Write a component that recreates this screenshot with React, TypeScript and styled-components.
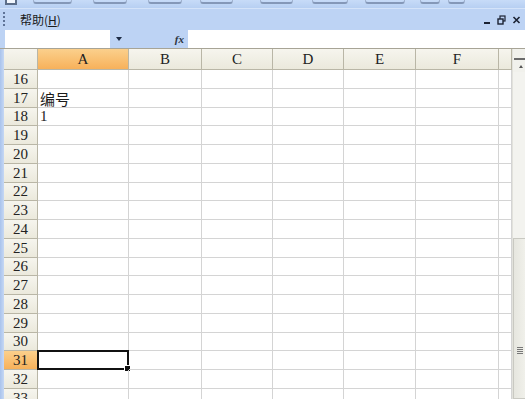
import React from 'react';
import styled, { createGlobalStyle } from 'styled-components';

const menuBlue = '#bdd3f4';
const grid = '#d4d4d4';
const headerLine = '#b9b6a6';
const orange = '#f7b15a';

const cols = [
  { key: 'A', width: 91 },
  { key: 'B', width: 73 },
  { key: 'C', width: 71 },
  { key: 'D', width: 71 },
  { key: 'E', width: 72 },
  { key: 'F', width: 83 },
  { key: '', width: 13 },
];
const template = `34px ${cols.map((c) => c.width + 'px').join(' ')}`;
const rows = Array.from({ length: 18 }, (_, i) => 16 + i);
const values: Record<number, string> = { 17: '编号', 18: '1' };
const selectedRow = 31;

// bottoms of the toolbar icons that are cut off at the top edge
const stubs = [
  { left: 33, width: 39 },
  { left: 93, width: 34 },
  { left: 148, width: 34 },
  { left: 200, width: 33 },
  { left: 260, width: 33 },
  { left: 312, width: 36 },
  { left: 365, width: 40 },
  { left: 420, width: 20 },
  { left: 448, width: 17 },
];

const GlobalStyle = createGlobalStyle`
  html, body { margin: 0; padding: 0; background: #fff; }
  body { font-family: 'Liberation Serif', 'Noto Sans CJK SC', serif; }
`;

const Window = styled.div`
  width: 525px;
  height: 399px;
  overflow: hidden;
  display: flex;
  flex-direction: column;
  background: #fff;
`;

const ToolbarStrip = styled.div`
  height: 8px;
  flex: none;
  position: relative;
  background: linear-gradient(#c7dbf8, #b7cff2);
`;

const Stub = styled.span<{ left: number; width: number }>`
  position: absolute;
  left: ${({ left }) => left}px;
  width: ${({ width }) => width}px;
  top: 0;
  height: 4px;
  border-bottom: 2px solid #5d6f90;
  border-left: 1px solid #8797b3;
  border-right: 1px solid #8797b3;
  border-radius: 0 0 3px 3px;
  box-sizing: border-box;
  opacity: 0.6;
`;

const FirstIcon = styled.span`
  position: absolute;
  left: 5px;
  top: 0;
  width: 12px;
  height: 5px;
  border: 2px solid #44556f;
  border-top: none;
  background: #fff;
  box-sizing: border-box;
  opacity: 0.8;
`;

const MenuBar = styled.div`
  height: 22px;
  flex: none;
  display: flex;
  align-items: center;
  background: ${menuBlue};
  border-top: 1px solid #d4e3f9;
  box-sizing: border-box;
`;

const Grip = styled.span`
  width: 2px;
  height: 16px;
  margin: 0 15px 0 3px;
  background: repeating-linear-gradient(#5f7397 0 2px, transparent 2px 4px);
`;

const MenuItem = styled.span`
  font-family: 'Noto Sans CJK SC', sans-serif;
  font-size: 12px;
  color: #1a1a1a;
  u { text-decoration: underline; }
`;

const Controls = styled.div`
  margin-left: auto;
  margin-right: 4px;
  display: flex;
  align-items: center;
  gap: 6px;
`;

const FormulaBar = styled.div`
  height: 18px;
  flex: none;
  display: flex;
  background: ${menuBlue};
  border-bottom: 1px solid #a7a496;
`;

const NameBox = styled.div`
  width: 105px;
  margin-left: 5px;
  background: #fff;
`;

const NameDrop = styled.div`
  width: 78px;
  display: flex;
  align-items: center;
  padding-left: 6px;
  box-sizing: border-box;
`;

const Caret = styled.span`
  width: 0;
  height: 0;
  border-left: 3px solid transparent;
  border-right: 3px solid transparent;
  border-top: 4px solid #1d2b45;
`;

const Fx = styled.span`
  margin-left: auto;
  margin-right: 4px;
  font-family: 'Liberation Serif', serif;
  font-style: italic;
  font-weight: bold;
  font-size: 11px;
  color: #2c3442;
`;

const FormulaInput = styled.div`
  flex: 1;
  background: #fff;
`;

const Sheet = styled.div`
  flex: 1;
  display: flex;
  min-height: 0;
`;

const LeftEdge = styled.div`
  width: 4px;
  flex: none;
  background: linear-gradient(90deg, #a9c3ec, #c6d8f4);
`;

const GridArea = styled.div`
  display: flex;
  flex-direction: column;
`;

const Row = styled.div<{ head?: boolean }>`
  display: grid;
  grid-template-columns: ${template};
  height: ${({ head }) => (head ? '21px' : '18.75px')};
  flex: none;
`;

const ColHead = styled.div<{ active?: boolean }>`
  display: flex;
  align-items: center;
  justify-content: center;
  font-size: 15px;
  line-height: 1;
  color: #222;
  background: ${({ active }) =>
    active ? `linear-gradient(#fbd08c, ${orange})` : 'linear-gradient(#f6f5ee, #ebe9dc)'};
  border-right: 1px solid ${headerLine};
  border-bottom: 1px solid ${headerLine};
  box-sizing: border-box;
`;

const RowHead = styled(ColHead)`
  padding-top: 1px;
`;

const Cell = styled.div<{ cjk?: boolean }>`
  position: relative;
  display: flex;
  align-items: center;
  padding-left: 2px;
  padding-top: ${({ cjk }) => (cjk ? '2px' : '0')};
  font-family: ${({ cjk }) => (cjk ? "'Noto Sans CJK SC', sans-serif" : "'Liberation Serif', serif")};
  font-size: 15px;
  line-height: 1;
  color: #1c1c1c;
  border-right: 1px solid ${grid};
  border-bottom: 1px solid ${grid};
  box-sizing: border-box;
  white-space: nowrap;
`;

const Selection = styled.div`
  position: absolute;
  left: -1px;
  top: -1px;
  right: -1px;
  bottom: -1px;
  border: 2px solid #111;
`;

const FillHandle = styled.span`
  position: absolute;
  right: -4px;
  bottom: -4px;
  width: 5px;
  height: 5px;
  background: #111;
  border: 1px solid #fff;
`;

const Scrollbar = styled.div`
  width: 13px;
  flex: none;
  display: flex;
  flex-direction: column;
  background: #f1f1ec;
  border-left: 1px solid #e2e2dc;
  box-sizing: border-box;
`;

const SplitBox = styled.div`
  height: 9px;
  flex: none;
  border-bottom: 2px solid #6b6b6b;
  margin: 0 0 0 1px;
`;

const UpArrow = styled.div`
  height: 12px;
  flex: none;
  display: flex;
  justify-content: flex-end;
  align-items: center;
  padding-right: 2px;
  &::after {
    content: '';
    border-left: 2px solid transparent;
    border-right: 2px solid transparent;
    border-bottom: 3px solid #555;
  }
`;

const Track = styled.div`
  height: 166px;
  flex: none;
  background: #f3f3ef;
`;

const Thumb = styled.div`
  flex: 1;
  border: 1px solid #c9c9c2;
  border-right: none;
  background: linear-gradient(90deg, #e6e6df, #f0f0ea);
  display: flex;
  justify-content: center;
  padding-top: 108px;
`;

const GripLines = styled.span`
  width: 6px;
  height: 7px;
  background: repeating-linear-gradient(#777 0 1px, transparent 1px 2px);
`;

const Minimize = () => (
  <svg width="8" height="10" viewBox="0 0 8 10">
    <rect x="1" y="7" width="6" height="2" fill="#1b2233" />
  </svg>
);

const Restore = () => (
  <svg width="9" height="10" viewBox="0 0 9 10">
    <rect x="3" y="1" width="5" height="5" fill="none" stroke="#1b2233" strokeWidth="1.2" />
    <rect x="1" y="4" width="5" height="5" fill={menuBlue} stroke="#1b2233" strokeWidth="1.4" />
  </svg>
);

const Close = () => (
  <svg width="9" height="10" viewBox="0 0 9 10">
    <path d="M1.5 2 L7.5 8 M7.5 2 L1.5 8" stroke="#1b2233" strokeWidth="1.6" />
  </svg>
);

const App: React.FC = (): JSX.Element => {
  return (
    <>
      <GlobalStyle />
      <Window>
        <ToolbarStrip>
          <FirstIcon />
          {stubs.map(({ left, width }) => (
            <Stub key={left} left={left} width={width} />
          ))}
        </ToolbarStrip>
        <MenuBar>
          <Grip />
          <MenuItem>
            帮助(<u>H</u>)
          </MenuItem>
          <Controls>
            <Minimize />
            <Restore />
            <Close />
          </Controls>
        </MenuBar>
        <FormulaBar>
          <NameBox />
          <NameDrop>
            <Caret />
            <Fx>fx</Fx>
          </NameDrop>
          <FormulaInput />
        </FormulaBar>
        <Sheet>
          <LeftEdge />
          <GridArea>
            <Row head>
              <ColHead />
              {cols.map(({ key }, i) => (
                <ColHead key={i} active={key === 'A'}>
                  {key}
                </ColHead>
              ))}
            </Row>
            {rows.map((r) => (
              <Row key={r}>
                <RowHead active={r === selectedRow}>{r}</RowHead>
                {cols.map(({ key }, i) => (
                  <Cell key={i} cjk={key === 'A' && r === 17}>
                    {key === 'A' ? values[r] : null}
                    {key === 'A' && r === selectedRow && (
                      <Selection>
                        <FillHandle />
                      </Selection>
                    )}
                  </Cell>
                ))}
              </Row>
            ))}
          </GridArea>
          <Scrollbar>
            <SplitBox />
            <UpArrow />
            <Track />
            <Thumb>
              <GripLines />
            </Thumb>
          </Scrollbar>
        </Sheet>
      </Window>
    </>
  );
};

export default App;
